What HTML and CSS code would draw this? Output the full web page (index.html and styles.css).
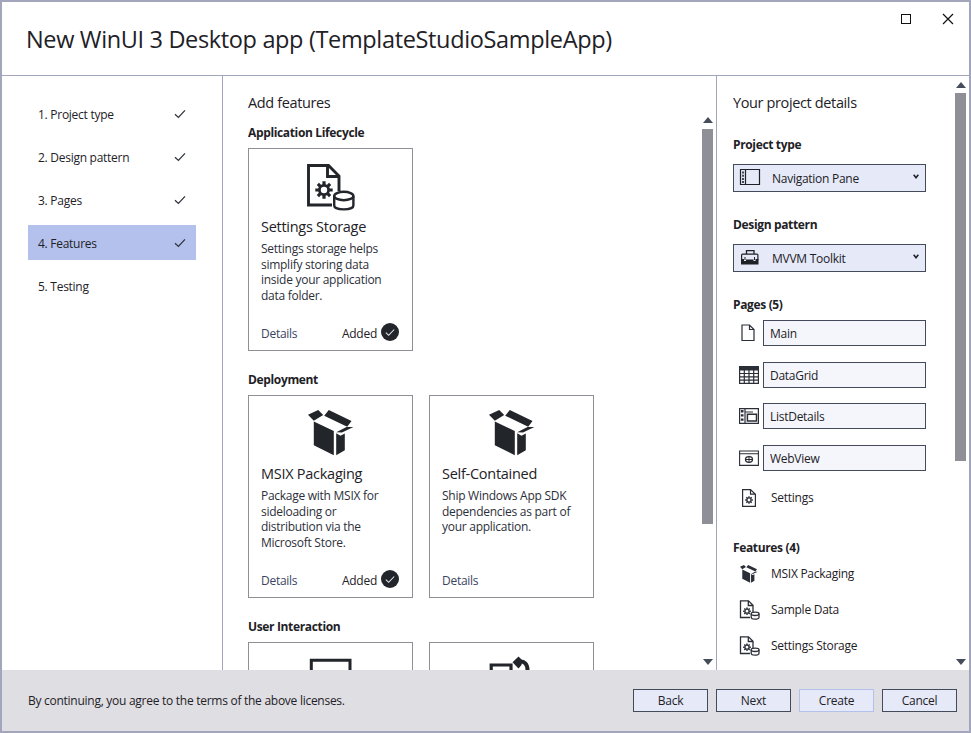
FILE: index.html
```
<!DOCTYPE html>
<html lang="en">
<head>
<meta charset="utf-8">
<title>New WinUI 3 Desktop app</title>
<link rel="stylesheet" href="styles.css">
</head>
<body>
<svg class="defs" aria-hidden="true">
  <symbol id="tick" viewBox="0 0 12 10"><path d="M1 5.2 4.4 8.4 11 1.4" fill="none" stroke="currentColor" stroke-width="1.3"/></symbol>
  <symbol id="box" viewBox="0 0 48 46">
    <path fill="currentColor" d="M1 4.7 11.2 0 16.2 4.9 6.8 10.8ZM21.8 0 44.5 11 40.2 16.8 17.2 5.7ZM6.8 11.4 26.8 21V45.2L6.8 35.2ZM29.2 23.3 33.5 25.7 37.8 23.4V40.3L29.2 45.2ZM29.3 22.3 39.5 17H46.4L35 22.6Z"/>
  </symbol>
  <symbol id="gear" viewBox="-9 -9 18 18">
    <circle r="4.6" fill="none" stroke="currentColor" stroke-width="2.8"/>
    <path d="M0-8.7V-5M0 8.7V5M-8.7 0H-5M8.7 0H5M-6.1-6.1-3.7-3.7M6.1 6.1 3.7 3.7M-6.1 6.1-3.7 3.7M6.1-6.1 3.7-3.7" stroke="currentColor" stroke-width="3.2"/>
  </symbol>
  <symbol id="storage" viewBox="0 0 50 48">
    <path d="M26 42H2.5V2.5H22.5L33 13V28M21.5 2.5V13.5H33" fill="none" stroke="currentColor" stroke-width="2.9"/>
    <use href="#gear" x="9" y="18" width="18" height="18"/>
    <path d="M28.2 33V42.5C28.2 47.6 47.4 47.6 47.4 42.5V33" fill="none" stroke="currentColor" stroke-width="2.4"/>
    <ellipse cx="37.8" cy="33" rx="9.6" ry="4.2" fill="none" stroke="currentColor" stroke-width="2.4"/>
  </symbol>
  <symbol id="storage-small" viewBox="0 0 21 20">
    <path d="M11 17.5H1.5V.8H9.5L14 5.3V12M9.3 1V5.5H14" fill="none" stroke="currentColor" stroke-width="1.3"/>
    <use href="#gear" x="4" y="7.2" width="8" height="8"/>
    <path d="M12.2 13.8V17.2C12.2 19.7 20 19.7 20 17.2V13.8" fill="none" stroke="currentColor" stroke-width="1.3"/>
    <ellipse cx="16.1" cy="13.8" rx="3.9" ry="1.7" fill="none" stroke="currentColor" stroke-width="1.3"/>
  </symbol>
</svg>

<div class="window">
  <header class="titlebar">
    <h1>New WinUI 3 Desktop app (TemplateStudioSampleApp)</h1>
    <div class="controls">
      <svg width="12" height="12" viewBox="0 0 12 12"><rect x="1.5" y="1.5" width="9" height="9" fill="none" stroke="#111" stroke-width="1"/></svg>
      <svg width="12" height="12" viewBox="0 0 12 12"><path d="M1 1 11 11M11 1 1 11" stroke="#111" stroke-width="1.2"/></svg>
    </div>
  </header>

  <div class="main">
    <nav class="steps">
      <a class="step"><span>1. Project type</span><svg class="tick"><use href="#tick"/></svg></a>
      <a class="step"><span>2. Design pattern</span><svg class="tick"><use href="#tick"/></svg></a>
      <a class="step"><span>3. Pages</span><svg class="tick"><use href="#tick"/></svg></a>
      <a class="step active"><span>4. Features</span><svg class="tick"><use href="#tick"/></svg></a>
      <a class="step"><span>5. Testing</span></a>
    </nav>

    <section class="features">
      <h2>Add features</h2>
      <div class="scroll-area">
        <div class="groups">
          <h3>Application Lifecycle</h3>
          <div class="cards">
            <article class="card">
              <svg class="card-icon storage"><use href="#storage"/></svg>
              <h4>Settings Storage</h4>
              <p>Settings storage helps<br>simplify storing data<br>inside your application<br>data folder.</p>
              <footer><a>Details</a><span class="added">Added<i class="badge"><svg class="tick"><use href="#tick"/></svg></i></span></footer>
            </article>
          </div>
          <h3>Deployment</h3>
          <div class="cards">
            <article class="card">
              <svg class="card-icon box"><use href="#box"/></svg>
              <h4>MSIX Packaging</h4>
              <p>Package with MSIX for<br>sideloading or<br>distribution via the<br>Microsoft Store.</p>
              <footer><a>Details</a><span class="added">Added<i class="badge"><svg class="tick"><use href="#tick"/></svg></i></span></footer>
            </article>
            <article class="card">
              <svg class="card-icon box"><use href="#box"/></svg>
              <h4>Self-Contained</h4>
              <p>Ship Windows App SDK<br>dependencies as part of<br>your application.</p>
              <footer><a>Details</a></footer>
            </article>
          </div>
          <h3>User Interaction</h3>
          <div class="cards">
            <article class="card">
              <svg class="card-icon" viewBox="0 0 48 48"><path d="M4.3 48V3.2H43V48" fill="none" stroke="currentColor" stroke-width="3"/></svg>
            </article>
            <article class="card">
              <svg class="card-icon" viewBox="0 0 48 48"><path d="M3.2 48V8H23V48" fill="none" stroke="currentColor" stroke-width="3.2"/><path d="M31 4.5C36.5 4 39.5 7 39.5 13" fill="none" stroke="currentColor" stroke-width="4"/><path d="M24.5 5.3 30.5-.5 34 3 33.5 8 30.5 11.5Z" fill="currentColor"/></svg>
            </article>
          </div>
        </div>
        <div class="scrollbar"><i class="up"></i><i class="thumb"></i><i class="down"></i></div>
      </div>
    </section>

    <aside class="details">
      <div class="details-body">
        <h2>Your project details</h2>
        <h3>Project type</h3>
        <div class="combo">
          <svg width="22" height="18" viewBox="0 0 22 18"><path d="M1.5 1.5H20.5V16.5H1.5ZM6.5 1.5V16.5" fill="none" stroke="currentColor" stroke-width="1.2"/><path d="M4 3.5V15" stroke="currentColor" stroke-width="1.6" stroke-dasharray="2 1.2"/></svg>
          <span>Navigation Pane</span>
          <svg class="chevron" viewBox="0 0 6 5"><path d="M.7.8 3 3.8 5.3.8" fill="none" stroke="currentColor" stroke-width="1.6"/></svg>
        </div>
        <h3>Design pattern</h3>
        <div class="combo">
          <svg width="22" height="18" viewBox="0 0 22 18"><path d="M7.5 6V2.6H15V6" fill="none" stroke="currentColor" stroke-width="1.3"/><path d="M2.6 12V7.1Q2.6 6.1 3.6 6.1H17.9Q18.9 6.1 18.9 7.1V12" fill="none" stroke="currentColor" stroke-width="1.2"/><path d="M2 11H5V13H7V11.5H14.5V13H16.5V11H19.5V16.5H2Z" fill="currentColor"/><path d="M6 9V12M15.5 9V12" stroke="currentColor" stroke-width="1"/></svg>
          <span>MVVM Toolkit</span>
          <svg class="chevron" viewBox="0 0 6 5"><path d="M.7.8 3 3.8 5.3.8" fill="none" stroke="currentColor" stroke-width="1.6"/></svg>
        </div>
        <h3>Pages (5)</h3>
        <ul class="pages">
          <li><svg class="side-icon" viewBox="0 0 20 18"><path d="M3 1H10.5L15 5.5V16.5H3ZM10.5 1V5.5H15" fill="none" stroke="currentColor" stroke-width="1.2"/></svg><span class="field">Main</span></li>
          <li><svg class="side-icon" viewBox="0 0 20 18"><path d="M0 0H20V4.5H0Z" fill="currentColor"/><path d="M.6 4V17.4H19.4V4M0 7.5H20M0 10.8H20M0 14.1H20M5.3 4V18M10 4V18M14.7 4V18" fill="none" stroke="currentColor" stroke-width="1.2"/></svg><span class="field">DataGrid</span></li>
          <li><svg class="side-icon" viewBox="0 0 20 18"><path d="M.6 1.6H19.4V16.4H.6ZM6 1.6V16.4M6 5H14" fill="none" stroke="currentColor" stroke-width="1.2"/><path d="M8.4 7.2H17.5V14H8.4Z" fill="none" stroke="currentColor" stroke-width="1.5"/><path d="M3.2 3V15" stroke="currentColor" stroke-width="2.6" stroke-dasharray="2.4 1.8"/></svg><span class="field">ListDetails</span></li>
          <li><svg class="side-icon" viewBox="0 0 20 18"><path d="M.6 2H19.4V16.4H.6ZM.6 4.8H19.4" fill="none" stroke="currentColor" stroke-width="1.1"/><path d="M10 6.8V14M6 10.5H14" stroke="currentColor" stroke-width="1"/><ellipse cx="10" cy="10.5" rx="3.5" ry="2.8" fill="none" stroke="currentColor" stroke-width="1.3"/></svg><span class="field">WebView</span></li>
        </ul>
        <div class="item"><svg class="side-icon" viewBox="0 0 20 18"><path d="M3.6.6H11.5L16.4 5.2V17.4H3.6ZM11.5.6V5.2H16.4" fill="none" stroke="currentColor" stroke-width="1.2"/><use href="#gear" x="6" y="7" width="8" height="8"/></svg>Settings</div>
        <h3 class="features-title">Features (4)</h3>
        <ul class="chosen">
          <li><svg class="side-icon"><use href="#box"/></svg>MSIX Packaging</li>
          <li><svg class="side-icon small-storage"><use href="#storage-small"/></svg>Sample Data</li>
          <li><svg class="side-icon small-storage"><use href="#storage-small"/></svg>Settings Storage</li>
        </ul>
      </div>
      <div class="scrollbar"><i class="up"></i><i class="thumb"></i><i class="down"></i></div>
    </aside>
  </div>

  <footer class="actions">
    <p>By continuing, you agree to the terms of the above licenses.</p>
    <div class="buttons">
      <button>Back</button><button>Next</button><button class="disabled">Create</button><button>Cancel</button>
    </div>
  </footer>
</div>
</body>
</html>
```
FILE: styles.css
```
* { box-sizing: border-box; margin: 0; padding: 0; }
body {
  font: 12px/16px "Open Sans", "Noto Sans", sans-serif;
  letter-spacing: -0.27px;
  color: #1e2126;
  background: #fff;
}
ul { list-style: none; }
svg { display: block; flex: none; overflow: visible; }
.defs { width: 0; height: 0; position: absolute; }

.window {
  width: 971px;
  height: 733px;
  border: 2px solid #a3a5bb;
  display: grid;
  grid-template-rows: 74px 594px 61px;
  overflow: hidden;
}

/* Title bar */
.titlebar {
  display: flex;
  justify-content: space-between;
  border-bottom: 1px solid #a3a5bb;
  padding: 11px 15px 0 24px;
}
.titlebar h1 {
  font-size: 23.5px;
  font-weight: 400;
  line-height: 32px;
  padding-top: 10px;
  letter-spacing: -0.35px;
  white-space: nowrap;
}
.controls { display: flex; gap: 30px; }

.main { display: grid; grid-template-columns: 221px 494px 252px; min-height: 0; }

/* Wizard steps */
.steps {
  border-right: 1px solid #a3a5bb;
  padding: 20px 26px 0;
  display: flex;
  flex-direction: column;
  gap: 8px;
}
.step {
  height: 35px;
  display: flex;
  align-items: center;
  justify-content: space-between;
  padding: 0 10px;
}
.step span { padding-top: 2px; }
.step.active { background: #b5c1ed; }
.tick { width: 12px; height: 10px; color: #30343c; }

h2 { font-size: 14.5px; line-height: 20px; font-weight: 400; letter-spacing: -0.37px; }
h3 { font-size: 12px; line-height: 16px; font-weight: 700; letter-spacing: -0.35px; }

/* Feature cards */
.features {
  border-right: 1px solid #a3a5bb;
  padding: 17px 3px 0 25px;
  display: flex;
  flex-direction: column;
  min-height: 0;
}
.scroll-area { flex: 1; min-height: 0; display: flex; justify-content: space-between; padding-top: 4px; }
.groups { overflow: hidden; padding-top: 8px; flex: 1; }
.cards { display: flex; gap: 16px; margin: 7px 0 21px; }
.card {
  width: 165px;
  height: 203px;
  flex: none;
  border: 1px solid #8f8f96;
  padding: 14px 12px 0;
  display: flex;
  flex-direction: column;
}
.card-icon { width: 48px; height: 48px; align-self: center; color: #22252a; }
.card-icon.storage { width: 50px; }
.card-icon.box { height: 46px; margin-bottom: 2px; }
.card h4 { font-size: 14.5px; font-weight: 400; line-height: 22px; margin-top: 5px; letter-spacing: -0.27px; }
.card p { line-height: 15.7px; height: 84px; margin-top: 3px; color: #2c2f3a; white-space: nowrap; }
.card footer { display: flex; justify-content: space-between; align-items: center; height: 18px; }
.card footer a { color: #3a4462; }
.added { display: flex; align-items: center; gap: 4px; }
.badge {
  width: 18px;
  height: 18px;
  border-radius: 50%;
  background: #22252a;
  display: flex;
  align-items: center;
  justify-content: center;
  margin: -4px 1px 0 0;
}
.badge .tick { color: #e6e8f4; width: 10px; height: 9px; }

/* Scrollbars */
.scrollbar { width: 11px; display: flex; flex-direction: column; align-items: center; padding-bottom: 5px; }
.scrollbar .up, .scrollbar .down { width: 0; height: 0; border: 5.5px solid transparent; border-top-width: 0; border-bottom-width: 0; }
.scrollbar .up { border-bottom: 6px solid #464d5a; }
.scrollbar .down { border-top: 6px solid #464d5a; margin-top: auto; }
.scrollbar .thumb { width: 11px; background: #8f8f97; margin-top: 6px; }
.features .thumb { height: 395px; }
.details .scrollbar { padding-top: 6px; }
.details .thumb { height: 368px; margin-top: 5px; }

/* Project details */
.details { display: flex; justify-content: space-between; padding: 0 3px 0 16px; min-height: 0; }
.details-body { width: 193px; padding-top: 17px; overflow: hidden; }
.details-body h2 { margin-bottom: 24px; }
.combo {
  height: 28px;
  margin: 11px 0 25px;
  border: 1px solid #434b5b;
  background: #e5e9f8;
  display: flex;
  align-items: center;
  padding: 0 6px 2px 5px;
}
.combo span { margin-left: 11px; flex: 1; padding-top: 4px; }
.chevron { width: 6px; height: 5px; margin: 0 0 1px; }
.pages { padding: 7px 0 1px 6px; }
.pages li { display: flex; align-items: center; height: 26px; margin-bottom: 15.67px; }
.side-icon { width: 20px; height: 18px; color: #2a2e37; }
.field {
  width: 163px;
  height: 26px;
  margin-left: 4px;
  border: 1px solid #434b5b;
  background: #f4f6fc;
  padding: 5px 6px;
}
.item, .chosen li { display: flex; align-items: center; gap: 12px; height: 20px; padding-left: 6px; }
.features-title { margin-top: 32px; }
.chosen { padding-top: 8px; }
.chosen li { margin-bottom: 16px; }
.side-icon.small-storage { width: 21px; height: 20px; margin-right: -1px; }

/* Footer */
.actions {
  background: #dfdee3;
  display: flex;
  align-items: flex-start;
  justify-content: space-between;
  padding: 19px 12px 0 26px;
}
.actions p { padding-top: 4px; }
.buttons { display: flex; gap: 8px; }
button {
  width: 75px;
  height: 23px;
  border: 1px solid #434b5b;
  background: #e5e9f8;
  font: inherit;
  letter-spacing: inherit;
  color: inherit;
}
button.disabled { border-color: #b5c1ed; }
```
